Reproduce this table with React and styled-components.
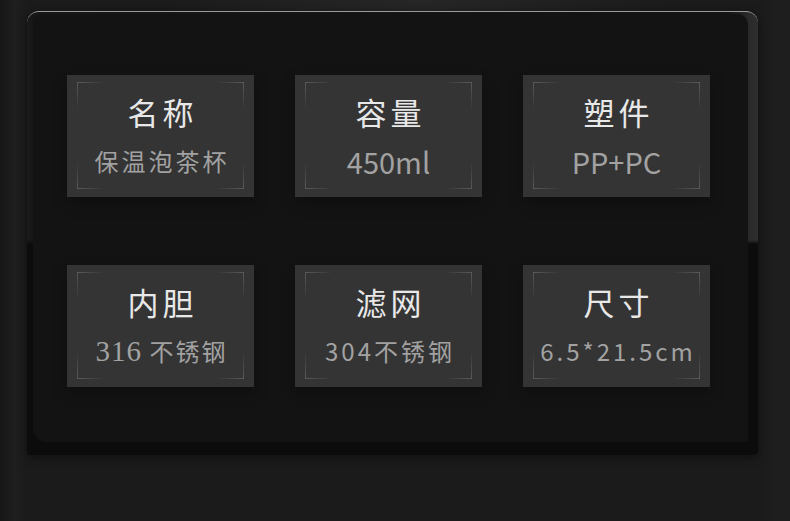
import React from 'react';
import styled, {createGlobalStyle} from 'styled-components';

export default function App() {
    const specs = [
        {title: '名称', value: '保温泡茶杯', size: 24, spacing: 3},
        {title: '容量', value: '450ml', size: 29, spacing: 0},
        {title: '塑件', value: 'PP+PC', size: 29, spacing: 0},
        {title: '内胆', value: <><Serif>316</Serif>{'\u00a0'}不锈钢</>, size: 24, spacing: 2},
        {title: '滤网', value: '304不锈钢', size: 24, spacing: 3},
        {title: '尺寸', value: '6.5*21.5cm', size: 24, spacing: 3},
    ];

    return (
        <Page>
            <GlobalStyle/>
            <Frame>
                <Panel>
                    <Grid>
                        {specs.map((s, i) => (
                            <Card key={i}>
                                <Corners/>
                                <Title>{s.title}</Title>
                                <Value $size={s.size} $spacing={s.spacing}>{s.value}</Value>
                            </Card>
                        ))}
                    </Grid>
                </Panel>
            </Frame>
        </Page>
    );
}

const GlobalStyle = createGlobalStyle`
  html, body {
    margin: 0;
    padding: 0;
    background: #1b1b1b;
  }

  *, *:before, *:after {
    box-sizing: border-box;
  }
`;

const Page = styled.div`
  width: 790px;
  height: 521px;
  overflow: hidden;
  padding: 11px 32px 0 27px;
  font-family: "Noto Sans CJK SC", "Noto Sans", sans-serif;
  background:
    radial-gradient(ellipse 260px 60px at 420px 0, rgba(255,255,255,0.05), transparent),
    linear-gradient(to right, #171717 0, #1e1e1e 14px, #1b1b1b 27px, #1b1b1b 760px, #1e1e1e 780px),
    #1b1b1b;
`;

const Frame = styled.div`
  width: 731px;
  height: 444px;
  padding: 2px 10px 13px 6px;
  border-radius: 12px 12px 3px 3px;
  border-top: 1px solid #9a9a9a;
  background:
    linear-gradient(to bottom, transparent 0, transparent 228px, #0c0c0c 232px),
    linear-gradient(to right, #1a1a1a 0, #161616 6px, #131313 700px, #2a2a2a 722px, #2e2e2e 731px);
  box-shadow: 0 2px 10px rgba(0,0,0,0.45);
`;

const Panel = styled.div`
  height: 100%;
  background: #131313;
  border-radius: 10px 10px 2px 14px;
  padding: 61px 0 0 34px;
`;

const Grid = styled.div`
  display: grid;
  grid-template-columns: repeat(3, 187px);
  grid-auto-rows: 122px;
  column-gap: 41px;
  row-gap: 68px;
`;

const Card = styled.div`
  position: relative;
  display: flex;
  flex-direction: column;
  align-items: center;
  padding-top: 20px;
  background: #343434;
  box-shadow: 0 6px 14px rgba(0,0,0,0.25);
`;

const line = '#5a5a5a';
const fade = 'rgba(90,90,90,0)';

const Corners = styled.div`
  position: absolute;
  inset: 7px 10px 8px 10px;
  pointer-events: none;
  background:
    linear-gradient(to right, ${line}, ${fade}) left top / 28px 1px no-repeat,
    linear-gradient(to bottom, ${line}, ${fade}) left top / 1px 28px no-repeat,
    linear-gradient(to left, ${line}, ${fade}) right top / 28px 1px no-repeat,
    linear-gradient(to bottom, ${line}, ${fade}) right top / 1px 28px no-repeat,
    linear-gradient(to right, ${line}, ${fade}) left bottom / 28px 1px no-repeat,
    linear-gradient(to top, ${line}, ${fade}) left bottom / 1px 28px no-repeat,
    linear-gradient(to left, ${line}, ${fade}) right bottom / 28px 1px no-repeat,
    linear-gradient(to top, ${line}, ${fade}) right bottom / 1px 28px no-repeat;
`;

const Title = styled.div`
  font-size: 31px;
  line-height: 34px;
  letter-spacing: 4px;
  padding-left: 4px;
  color: #e8e8e8;
`;

const Value = styled.div`
  margin-top: 15px;
  font-size: ${p => p.$size}px;
  line-height: 34px;
  letter-spacing: ${p => p.$spacing}px;
  padding-left: ${p => p.$spacing}px;
  color: #a2a2a2;
  white-space: nowrap;
`;

const Serif = styled.span`
  font-family: "Liberation Serif", "Times New Roman", serif;
  font-size: 29px;
  letter-spacing: 1px;
`;
